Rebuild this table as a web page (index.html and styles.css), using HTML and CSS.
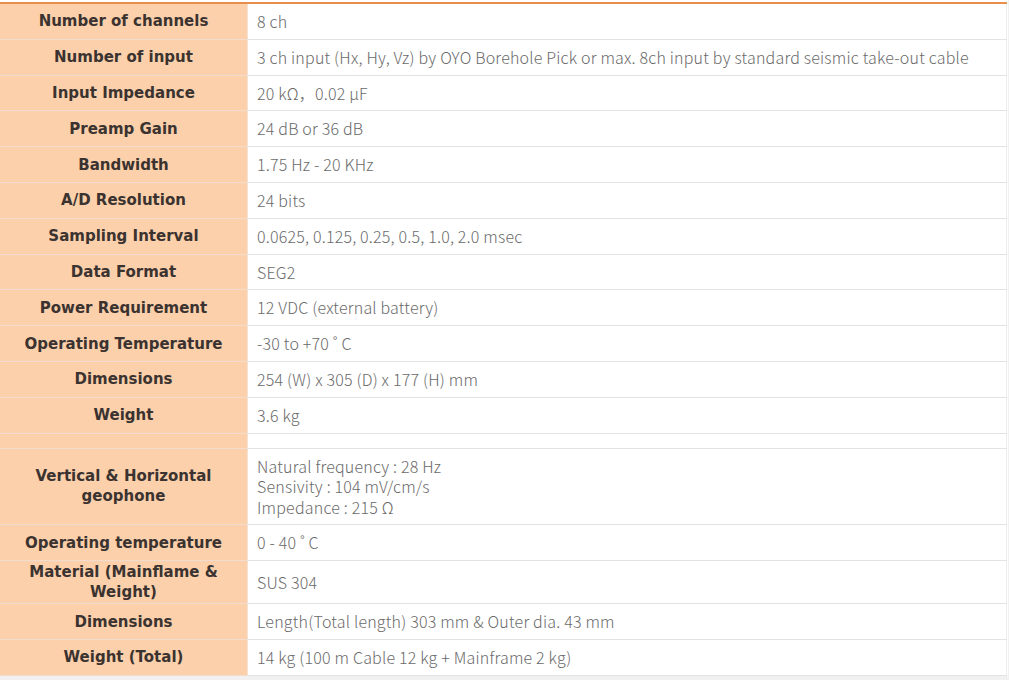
FILE: index.html
```html
<!DOCTYPE html>
<html>
<head>
<meta charset="utf-8">
<link rel="stylesheet" href="styles.css">
</head>
<body>
<div class="wrap">
<table class="spec">
<tbody>
<tr><th>Number of channels</th><td>8 ch</td></tr>
<tr><th>Number of input</th><td>3 ch input (Hx, Hy, Vz) by OYO Borehole Pick or max. 8ch input by standard seismic take-out cable</td></tr>
<tr><th>Input Impedance</th><td>20 kΩ，0.02 μF</td></tr>
<tr><th>Preamp Gain</th><td>24 dB or 36 dB</td></tr>
<tr><th>Bandwidth</th><td>1.75 Hz - 20 KHz</td></tr>
<tr><th>A/D Resolution</th><td>24 bits</td></tr>
<tr><th>Sampling Interval</th><td>0.0625, 0.125, 0.25, 0.5, 1.0, 2.0 msec</td></tr>
<tr><th>Data Format</th><td>SEG2</td></tr>
<tr><th>Power Requirement</th><td>12 VDC (external battery)</td></tr>
<tr><th>Operating Temperature</th><td>-30 to +70 ˚ C</td></tr>
<tr><th>Dimensions</th><td>254 (W) x 305 (D) x 177 (H) mm</td></tr>
<tr><th>Weight</th><td>3.6 kg</td></tr>
<tr class="blank"><th></th><td></td></tr>
<tr><th>Vertical &amp; Horizontal geophone</th><td class="multi">Natural frequency : 28 Hz<br>Sensivity : 104 mV/cm/s<br>Impedance : 215 Ω</td></tr>
<tr><th>Operating temperature</th><td>0 - 40 ˚ C</td></tr>
<tr><th>Material (Mainflame &amp; Weight)</th><td>SUS 304</td></tr>
<tr><th>Dimensions</th><td>Length(Total length) 303 mm &amp; Outer dia. 43 mm</td></tr>
<tr><th>Weight (Total)</th><td>14 kg (100 m Cable 12 kg + Mainframe 2 kg)</td></tr>
</tbody>
</table>
</div>
</body>
</html>
```
FILE: styles.css
```css
html, body {
  margin: 0;
  padding: 0;
}
body {
  background: #f1f1f1;
  width: 1009px;
  height: 680px;
  overflow: hidden;
}
.wrap {
  background: #ffffff;
  padding-top: 2px;
  width: 1008px;
}
.spec {
  border-collapse: collapse;
  width: 1007px;
  border-top: 2px solid #e98e4a;
  table-layout: fixed;
}
.spec th {
  width: 235px;
  background: #fcd0ab;
  color: #3b3330;
  font-family: "DejaVu Sans", sans-serif;
  font-weight: bold;
  font-size: 15px;
  line-height: 20px;
  padding: 1px 6px;
  text-align: center;
  vertical-align: middle;
  border-bottom: 1px solid #f1dccd;
  border-right: 1px solid #f3e2d6;
}
.spec td {
  color: #6a6a6a;
  font-family: "Noto Sans CJK JP", "Noto Sans", sans-serif;
  font-weight: 300;
  font-size: 16px;
  letter-spacing: 0.2px;
  line-height: 20.8px;
  padding: 7px 9px;
  vertical-align: middle;
  border-bottom: 1px solid #e2e2e2;
  border-right: 1px solid #eeeeee;
}
.spec td.multi {
  line-height: 20.6px;
}
```
